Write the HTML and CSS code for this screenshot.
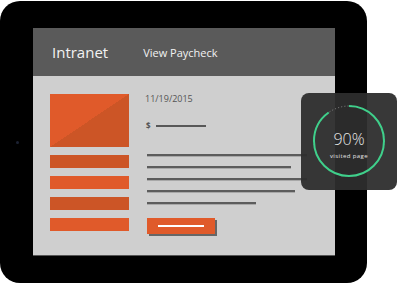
FILE: index.html
```html
<!DOCTYPE html>
<html lang="en">
<head>
  <meta charset="UTF-8">
  <title>Intranet</title>
  <link rel="stylesheet" href="styles.css">
</head>
<body>
  <div class="tablet">
    <span class="camera"></span>
    <div class="screen">
      <div class="topbar">
        <span class="brand">Intranet</span>
        <span class="page-title">View Paycheck</span>
      </div>
      <div class="content">
        <div class="side">
          <div class="thumb"></div>
          <div class="bar dark"></div>
          <div class="bar"></div>
          <div class="bar dark"></div>
          <div class="bar"></div>
        </div>
        <div class="main">
          <div class="date">11/19/2015</div>
          <div class="amount"><span>$</span><i></i></div>
          <div class="lines">
            <i style="width: 160px"></i>
            <i style="width: 144px"></i>
            <i style="width: 160px"></i>
            <i style="width: 148px"></i>
            <i style="width: 109px"></i>
          </div>
          <div class="button"><i></i></div>
        </div>
      </div>
    </div>

    <div class="stat">
      <svg viewBox="0 0 96 96" width="96" height="96">
        <circle cx="48" cy="48" r="35" fill="none" stroke="#8a8a8a" stroke-width="1" stroke-dasharray="1 2.2"/>
        <circle cx="48" cy="48" r="35" fill="none" stroke="#3fd08b" stroke-width="2"
                stroke-dasharray="197.9 300" transform="rotate(-90 48 48)"/>
      </svg>
      <div class="stat-text">
        <span class="pct">90%</span>
        <span class="label">visited page</span>
      </div>
    </div>
  </div>
</body>
</html>
```

FILE: styles.css
```css
body {
  margin: 0;
  background: #ffffff;
  font-family: "Open Sans", "DejaVu Sans", sans-serif;
}

/* Tablet frame */
.tablet {
  position: relative;
  width: 367px;
  height: 282px;
  margin-top: 1px;
  background: #000000;
  border-radius: 20px;
  padding: 27px 32px 0 33px;
  box-sizing: border-box;
}

.camera {
  position: absolute;
  left: 16px;
  top: 140px;
  width: 3px;
  height: 3px;
  border-radius: 50%;
  background: #1c2233;
}

.screen {
  width: 302px;
  height: 227px;
  background: #cfcfcf;
  display: flex;
  flex-direction: column;
  box-shadow: 0 1px 0 #555;
}

.topbar {
  height: 48px;
  background: #5a5a5a;
  display: flex;
  align-items: center;
  gap: 35px;
  padding-left: 19px;
  color: #f2f2f2;
}

.brand {
  font-size: 15px;
}

.page-title {
  font-size: 11px;
}

/* Page body */
.content {
  display: flex;
  gap: 16px;
  padding: 18px 0 0 17px;
}

.side {
  display: flex;
  flex-direction: column;
  gap: 8px;
  width: 79px;
}

.thumb {
  height: 53px;
  background: linear-gradient(to bottom right, #e05a2a 50%, #cc5526 50%);
}

.bar {
  height: 13px;
  background: #e05a2a;
}

.bar.dark {
  background: #cc5526;
}

.main {
  display: flex;
  flex-direction: column;
}

.date {
  font-size: 9px;
  color: #555555;
  line-height: 10px;
}

.amount {
  display: flex;
  align-items: center;
  gap: 5px;
  margin-top: 16px;
  font-size: 8px;
  font-weight: bold;
  color: #555555;
  padding-left: 1px;
}

.amount i {
  width: 50px;
  height: 2px;
  background: #585858;
}

.lines {
  display: flex;
  flex-direction: column;
  gap: 10px;
  margin-top: 23px;
  margin-left: 2px;
}

.lines i {
  display: block;
  height: 2px;
  background: #5c5c5c;
  box-shadow: 0 1px 0 #a8a8a8;
}

.button {
  width: 68px;
  height: 16px;
  margin-top: 14px;
  margin-left: 2px;
  background: #e05a2a;
  box-shadow: 2px 2px 0 #666;
  display: flex;
  align-items: center;
  justify-content: center;
}

.button i {
  width: 46px;
  height: 2px;
  background: #ffffff;
}

/* Overlay stat card */
.stat {
  position: absolute;
  left: 301px;
  top: 92px;
  width: 96px;
  height: 97px;
  background: rgba(45, 45, 45, 0.95);
  border-radius: 8px;
}

.stat svg {
  position: absolute;
  left: 0;
  top: 0;
}

.stat-text {
  position: absolute;
  inset: 0;
  display: flex;
  flex-direction: column;
  align-items: center;
  justify-content: center;
  color: #e6e6e6;
  padding-top: 6px;
}

.pct {
  font-size: 16px;
  font-weight: 300;
  line-height: 18px;
}

.label {
  font-size: 6px;
  letter-spacing: 0.4px;
  margin-top: 4px;
}
```
